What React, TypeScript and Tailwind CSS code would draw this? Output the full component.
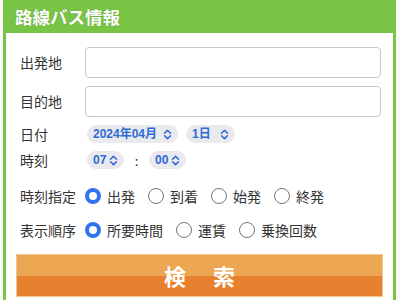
import { useState } from "react"

const jp = "font-['Noto_Sans_CJK_JP','Noto_Sans',sans-serif]"
const pillFont = "font-['Liberation_Sans','Noto_Sans_CJK_JP',sans-serif]"

function UpDown() {
  return (
    <svg width="9" height="11" viewBox="0 0 9 11" className="shrink-0">
      <path
        d="M1.5 4.2 L4.5 1.4 L7.5 4.2 M1.5 6.8 L4.5 9.6 L7.5 6.8"
        fill="none"
        stroke="#2f6bd6"
        strokeWidth="1.5"
        strokeLinecap="round"
        strokeLinejoin="round"
      />
    </svg>
  )
}

function Pill({ text, className }: { text: string; className: string }) {
  return (
    <div
      className={`flex h-[18px] items-center justify-between rounded-full bg-[#e9e9ee] pl-[6px] pr-[6px] text-[12px] font-bold text-[#2f6bd6] ${pillFont} ${className}`}
    >
      <span className="leading-none">{text}</span>
      <UpDown />
    </div>
  )
}

function Radio({ label, checked, onClick, className }: { label: string; checked: boolean; onClick: () => void; className?: string }) {
  return (
    <button type="button" onClick={onClick} className={`flex items-center gap-[6px] ${className ?? ""}`}>
      {checked ? (
        <span className="h-[16px] w-[16px] rounded-full border-[4.5px] border-[#2f74ee] bg-white" />
      ) : (
        <span className="h-[16px] w-[16px] rounded-full border-[1.5px] border-[#767676] bg-white" />
      )}
      <span className="text-[14px] leading-none text-[#333]">{label}</span>
    </button>
  )
}

export default function App() {
  const [timeType, setTimeType] = useState("出発")
  const [order, setOrder] = useState("所要時間")

  return (
    <div className={`h-[300px] w-[400px] overflow-hidden bg-[#fafafa] pl-[3px] ${jp}`}>
      <div className="h-[320px] w-[393px] border-x-[3px] border-[#78c444] bg-white">
        <div className="flex h-[33px] items-center bg-[#78c444] pl-[9px]">
          <h1 className="text-[17.5px] font-bold leading-none text-white [text-shadow:0_0_1px_rgba(60,110,30,0.6)]">
            路線バス情報
          </h1>
        </div>

        <div className="px-[10px] pt-[14px]">
          <div className="flex flex-col gap-[8px] pl-[4px] pr-[2px]">
            <div className="flex h-[31px] items-center">
              <span className="w-[65px] text-[14px] text-[#333]">出発地</span>
              <input className="h-[31px] flex-1 rounded-[4px] border border-[#c8c8c8] bg-white px-2 outline-none" />
            </div>
            <div className="flex h-[31px] items-center">
              <span className="w-[65px] text-[14px] text-[#333]">目的地</span>
              <input className="h-[31px] flex-1 rounded-[4px] border border-[#c8c8c8] bg-white px-2 outline-none" />
            </div>
            <div className="flex h-[18px] items-center">
              <span className="w-[67px] text-[14px] text-[#333]">日付</span>
              <Pill text="2024年04月" className="w-[91px]" />
              <Pill text="1日" className="ml-[8px] w-[49px]" />
            </div>
            <div className="flex h-[18px] items-center">
              <span className="w-[67px] text-[14px] text-[#333]">時刻</span>
              <Pill text="07" className="w-[37px]" />
              <span className="w-[25px] text-center text-[13px] leading-none text-[#333]">:</span>
              <Pill text="00" className="w-[37px]" />
            </div>
          </div>

          <div className="mt-[18px] flex h-[18px] items-center pl-[4px]">
            <span className="w-[65px] text-[14px] text-[#333]">時刻指定</span>
            {["出発", "到着", "始発", "終発"].map((v) => (
              <Radio key={v} label={v} checked={timeType === v} onClick={() => setTimeType(v)} className="mr-[13px]" />
            ))}
          </div>

          <div className="mt-[16px] flex h-[18px] items-center pl-[4px]">
            <span className="w-[65px] text-[14px] text-[#333]">表示順序</span>
            {["所要時間", "運賃", "乗換回数"].map((v) => (
              <Radio key={v} label={v} checked={order === v} onClick={() => setOrder(v)} className="mr-[13px]" />
            ))}
          </div>

          <button
            type="button"
            className="mt-[15px] flex h-[43px] w-[367px] items-center justify-center gap-[27px] border border-[#f3c48e] bg-[linear-gradient(#eda651_0,#eda651_50%,#e8812f_50%,#e8812f_100%)] text-[22px] font-bold text-white"
          >
            <span>検</span>
            <span>索</span>
          </button>
        </div>
      </div>
    </div>
  )
}
